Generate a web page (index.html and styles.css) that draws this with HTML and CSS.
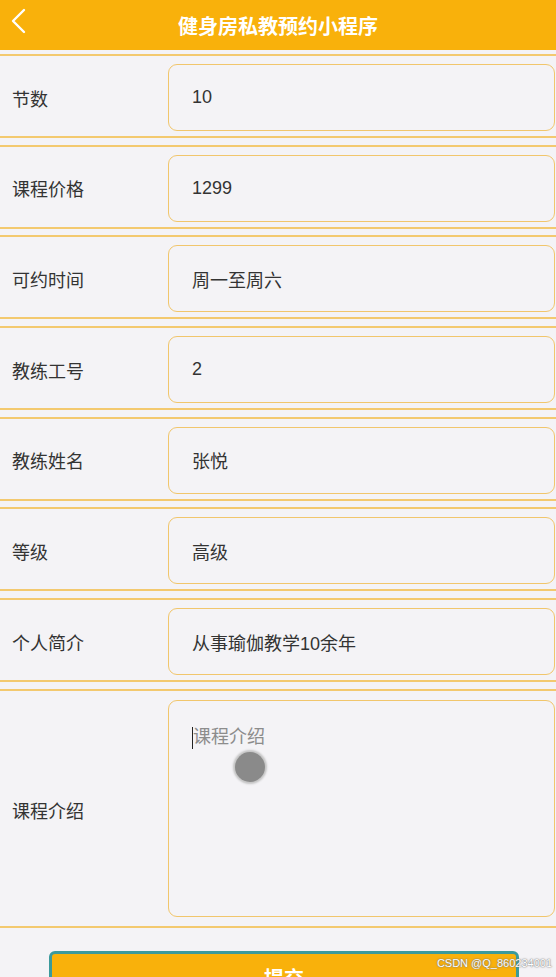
FILE: index.html
```html
<!DOCTYPE html>
<html lang="zh-CN">
<head>
  <meta charset="UTF-8" />
  <meta name="viewport" content="width=device-width, initial-scale=1.0" />
  <title>健身房私教预约小程序</title>
  <link rel="stylesheet" href="styles.css">
</head>
<body>
  <header class="topbar">
    <svg class="back" width="20" height="26" viewBox="0 0 20 26">
      <polyline points="15,2 4,13 15,24" fill="none" stroke="#fff" stroke-width="2.4" stroke-linecap="round" stroke-linejoin="round"/>
    </svg>
    <h1>健身房私教预约小程序</h1>
  </header>

  <main class="form">
    <div class="row">
      <label>节数</label>
      <div class="field">10</div>
    </div>
    <div class="row">
      <label>课程价格</label>
      <div class="field">1299</div>
    </div>
    <div class="row">
      <label>可约时间</label>
      <div class="field">周一至周六</div>
    </div>
    <div class="row">
      <label>教练工号</label>
      <div class="field">2</div>
    </div>
    <div class="row">
      <label>教练姓名</label>
      <div class="field">张悦</div>
    </div>
    <div class="row">
      <label>等级</label>
      <div class="field">高级</div>
    </div>
    <div class="row">
      <label>个人简介</label>
      <div class="field">从事瑜伽教学10余年</div>
    </div>
    <div class="row row-tall">
      <label>课程介绍</label>
      <div class="field area"><span class="caret"></span><span class="placeholder">课程介绍</span></div>
    </div>

    <div class="actions">
      <button class="submit">提交</button>
    </div>
  </main>

  <div class="touch"></div>
  <div class="watermark">CSDN @Q_860234001</div>
</body>
</html>
```

FILE: styles.css
```css
body {
  margin: 0;
  background: #f4f3f6;
  font-family: "Noto Sans CJK SC", "Liberation Sans", sans-serif;
  color: #333;
  overflow: hidden;
  height: 977px;
}
.topbar {
  height: 50px;
  background: #f9b10b;
  display: flex;
  align-items: center;
  justify-content: center;
  position: relative;
}
.topbar h1 {
  margin: 0;
  font-size: 20px;
  font-weight: bold;
  color: #fff;
}
.back {
  position: absolute;
  left: 9px;
  top: 8px;
}
.form {
  padding-top: 4px;
}
.row {
  display: flex;
  align-items: center;
  border-top: 2px solid #f3c96f;
  border-bottom: 2px solid #f3c96f;
  padding: 8px 1px 5px 0;
  margin-bottom: 6.7px;
}
.row label {
  width: 156px;
  padding-left: 12px;
  font-size: 18px;
  color: #333;
}
.field {
  flex: 1;
  height: 67px;
  box-sizing: border-box;
  border: 1px solid #f1c66c;
  border-radius: 9px;
  padding: 0 23px;
  display: flex;
  align-items: center;
  font-family: "Liberation Sans", "Noto Sans CJK SC", sans-serif;
  font-size: 18px;
  color: #333;
}
.row-tall {
  padding: 9px 1px 9px 0;
}
.row-tall label {
  padding-top: 4px;
}
.area {
  height: 217px;
  align-items: flex-start;
  padding-top: 24px;
}
.caret {
  width: 1px;
  height: 22px;
  background: #222;
  margin-top: 2px;
}
.placeholder {
  color: #8c8c8c;
  font-size: 18px;
  line-height: 24px;
}
.actions {
  padding: 16px 0 0 49px;
}
.submit {
  width: 470px;
  height: 54px;
  background: #f9b10b;
  border: 3px solid #3b9a9c;
  border-radius: 6px;
  color: #fff;
  font-size: 20px;
  font-weight: bold;
  font-family: "Noto Sans CJK SC", sans-serif;
}
.touch {
  position: absolute;
  left: 235px;
  top: 752px;
  width: 30px;
  height: 30px;
  border-radius: 50%;
  background: #8a8a8a;
  box-shadow: 0 0 2px 2px #c4c4c4;
}
.watermark {
  position: absolute;
  right: 4px;
  top: 957px;
  font-family: "Liberation Sans", sans-serif;
  font-size: 11px;
  color: #fff;
  text-shadow: 0 0 2px #777, 0 0 1px #777;
}
```
